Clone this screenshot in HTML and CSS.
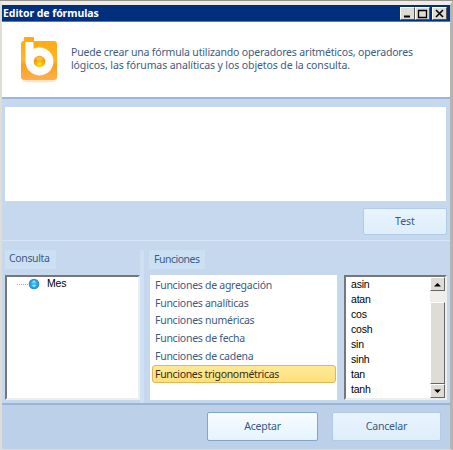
FILE: index.html
```html
<!DOCTYPE html>
<html lang="es">
<head>
<meta charset="utf-8">
<title>Editor de fórmulas</title>
<link rel="stylesheet" href="styles.css">
</head>
<body>
<div class="window">
  <header class="titlebar">
    <h1>Editor de fórmulas</h1>
    <div class="controls">
      <button aria-label="Minimizar"><svg width="13" height="11"><path d="M3 8.500h6" stroke="#000" stroke-width="2"/></svg></button>
      <button aria-label="Maximizar"><svg width="13" height="11"><path d="M2.500 2v7.500h8V2M2 2.500h9" fill="none" stroke="#000" stroke-width="1.300"/></svg></button>
      <button class="close" aria-label="Cerrar"><svg width="13" height="11"><path d="M3 2l7 7M10 2L3 9" stroke="#000" stroke-width="1.600"/></svg></button>
    </div>
  </header>
  <section class="intro">
    <svg class="logo" width="40" height="48" viewBox="0 0 40 48">
      <defs>
        <linearGradient id="orange" x1="0" y1="0" x2="0" y2="1"><stop offset="0" stop-color="#ffa90e"/><stop offset=".55" stop-color="#ffb52b"/><stop offset=".65" stop-color="#ff9d17"/><stop offset="1" stop-color="#ffb04b"/></linearGradient>
        <radialGradient id="ball" cx=".5" cy=".75"><stop offset="0" stop-color="#ffe83b"/><stop offset=".55" stop-color="#ffb800"/><stop offset="1" stop-color="#f29a16"/></radialGradient>
      </defs>
      <ellipse cx="20" cy="45" rx="17" ry="1.500" fill="#f4e4ce"/>
      <path d="M6 1h8q1 0 1 1v3h20q3 0 3 3v33q0 3-3 3H5q-3 0-3-3V8q0-3 3-3V2q0-1 1-1z" fill="url(#orange)"/>
      <path d="M6.500 6h8v6.800A14 14 0 1 1 6.500 25z" fill="#fff"/>
      <circle cx="20.500" cy="25.500" r="5.800" fill="url(#ball)"/>
      <ellipse cx="20.500" cy="22.500" rx="3.500" ry="2" fill="#ffd45e" opacity=".6"/>
    </svg>
    <p><span class="line1">Puede crear una fórmula utilizando operadores aritméticos, operadores</span><span class="line2">lógicos, las fórumas analíticas y los objetos de la consulta.</span></p>
  </section>
  <section class="editor">
    <div class="formula"></div>
    <button class="btn test">Test</button>
  </section>
  <main class="panels">
    <section class="query">
      <h2>Consulta</h2>
      <div class="sunken tree">
        <i class="branch"></i>
        <svg width="12" height="12"><defs><radialGradient id="blue"><stop offset="0" stop-color="#42cfff"/><stop offset=".7" stop-color="#229ee5"/><stop offset="1" stop-color="#3b83bb"/></radialGradient></defs><circle cx="6" cy="6" r="5.300" fill="url(#blue)"/><path d="M3.500 4.500L6 2l2.500 2.500zM3.500 7h5L6 9.500z" fill="#8fe0ff"/></svg>
        <span>Mes</span>
      </div>
    </section>
    <section class="functions">
      <h2>Funciones</h2>
      <ul class="categories">
        <li>Funciones de agregación</li><li>Funciones analíticas</li><li>Funciones numéricas</li><li>Funciones de fecha</li><li>Funciones de cadena</li><li class="selected">Funciones trigonométricas</li>
      </ul>
    </section>
    <div class="sunken names">
      <ul><li>asin</li><li>atan</li><li>cos</li><li>cosh</li><li>sin</li><li>sinh</li><li>tan</li><li>tanh</li></ul>
      <div class="scrollbar">
        <div class="arrow"><svg width="8" height="5"><path d="M0 4.500h7L3.500 1z"/></svg></div>
        <div class="gap"></div>
        <div class="thumb"></div>
        <div class="arrow"><svg width="8" height="5"><path d="M0 .5h7L3.500 4z"/></svg></div>
      </div>
    </div>
  </main>
  <footer>
    <button class="btn primary">Aceptar</button>
    <button class="btn">Cancelar</button>
  </footer>
</div>
</body>
</html>
```
FILE: styles.css
```css
* { box-sizing: border-box; }
body { margin: 0; background: #dfddd6; overflow: hidden; }
button { padding: 0; font: inherit; letter-spacing: inherit; }
h1, h2, p, ul { margin: 0; padding: 0; }
ul { list-style: none; }
.window { width: 453px; height: 450px; display: flex; flex-direction: column; border: solid; border-width: 5px 3px 1px 2px; border-color: #eeece6 #b5b4b1 #dcdbd7 #dfddd6; font: 10.500px/12px "Noto Sans", sans-serif; letter-spacing: -.2px; color: #3d5b83; background: #c6d8ee; }
.window::before { content: ""; position: absolute; left: 0; top: 0; width: 453px; height: 1px; background: #96938e; }
.titlebar { height: 17px; flex: none; background: #002f7d; display: flex; justify-content: space-between; align-items: center; padding: 0 3px 0 1px; border-bottom: 1px solid #65789c; }
h1 { color: #fff; font-size: 10.500px; line-height: 16px; letter-spacing: -.07px; }
.controls { display: flex; }
.controls button { width: 15px; height: 13px; background: #dedbd2; border: 1px solid; border-color: #fff #55534f #55534f #fff; display: flex; }
.controls .close { margin-left: 2px; }
.intro { height: 77px; flex: none; background: #fff; border-bottom: 2px solid #9bb8d8; display: flex; padding: 14px 0 0 17px; }
.logo { flex: none; }
.intro p { padding: 9px 0 0 12px; white-space: nowrap; }
.intro span { display: block; width: max-content; line-height: 14px; letter-spacing: -.17px; }
.intro .line2 { line-height: 12px; letter-spacing: -.1px; }
.editor { height: 142px; flex: none; padding: 8px 4px 0 0; display: flex; flex-direction: column; align-items: flex-end; border-bottom: 1px solid #d4e5f7; }
.formula { width: 441px; height: 94px; background: #fff; }
.btn { width: 109px; height: 29px; border: 1px solid #b1cbe7; border-radius: 2px; color: #365a85; text-align: center; background: linear-gradient(#e8f3fd, #deeefa); }
.test { width: 84px; height: 27px; margin: 7px -1px 0 0; padding-bottom: 2px; letter-spacing: 0; }
.panels { height: 162px; flex: none; display: flex; padding: 9px 0 0 3px; }
.query { width: 139px; border-right: 4px solid #cfe0f3; }
.functions { width: 196px; padding-left: 6px; }
h2 { width: 51px; height: 19px; font-size: 10.500px; line-height: 17px; font-weight: 400; padding-left: 4px; background: #cce0f4; margin-bottom: 6px; letter-spacing: -.35px; }
.functions h2 { width: 56px; margin-left: -1px; padding-left: 5px; line-height: 18px; letter-spacing: -.5px; }
.sunken { background: #fff; border: 2px solid; border-color: #777 #eceff0 #eceff0 #777; height: 125px; font-family: "Liberation Sans", sans-serif; color: #000; }
.tree { width: 135px; display: flex; align-items: flex-start; padding-left: 10px; }
.tree .branch { width: 11px; border-top: 1px dotted #aaa; margin-top: 7px; }
.tree svg { margin-top: 1px; }
.tree span { margin: 0 0 0 7px; }
.categories { width: 187px; height: 125px; background: #fff; padding: 2px 1px 0 2px; }
.categories li { height: 17.700px; line-height: 17.700px; padding-left: 3px; white-space: nowrap; letter-spacing: -.27px; }
.categories .selected { background: linear-gradient(#ffe995, #ffdf7d); border: 1px solid #e3b650; border-radius: 3px; padding-left: 2px; line-height: 16px; letter-spacing: -.31px; color: #303020; }
.names { width: 103px; margin: 25px 0 0 4px; display: flex; justify-content: space-between; }
.names li { height: 15px; line-height: 15px; padding-left: 5px; }
.scrollbar { width: 15px; display: flex; flex-direction: column; background: #efeeea; }
.arrow { height: 14px; display: flex; align-items: center; justify-content: center; background: #dedcd4; border: 1px solid; border-color: #fff #666 #666 #fff; }
.gap { height: 11px; }
.thumb { flex: 1; background: #dedcd4; border: 1px solid; border-color: #fff #666 #666 #fff; }
footer { flex: none; height: 46px; border-top: 2px solid #98b5d6; background: #bcd0e9; display: flex; justify-content: flex-end; gap: 14px; padding: 7px 9px 0 0; }
footer .btn { padding-bottom: 1px; }
.btn.primary { width: 111px; border-color: #82a6c9; background: linear-gradient(#f8fcff, #e4f4fd); }
```
